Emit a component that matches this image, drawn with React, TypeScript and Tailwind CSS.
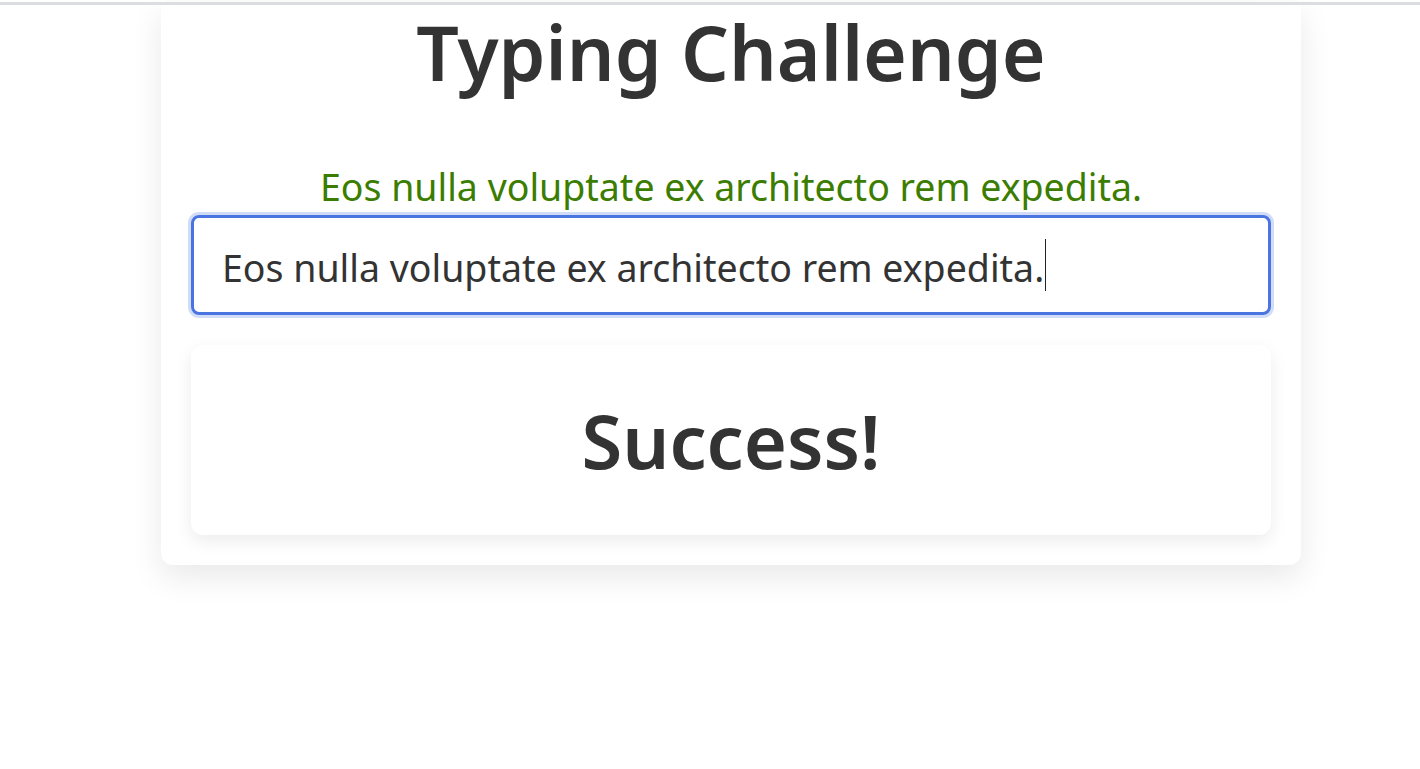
import React from "react";

export default function App() {
  return (
    <div className="min-h-[769px] w-full bg-white overflow-hidden" style={{ fontFamily: '"Noto Sans", "Open Sans", sans-serif' }}>
      <div className="h-[2px] bg-white" />
      <div className="h-[3px] bg-[#dcdde0] relative z-10" />
      <div className="ml-[161px] w-[1140px] bg-white rounded-b-xl shadow-[0_12px_32px_rgba(0,0,0,0.09)] px-[30px] pb-[30px] -mt-[3px]">
        <h1 className="text-center text-[75px] leading-[96px] font-semibold text-[#333333] pt-[2px]">
          Typing Challenge
        </h1>
        <p className="text-center text-[37.5px] leading-[48px] text-[#3b7d00] mt-[63px]">
          Eos nulla voluptate ex architecto rem expedita.
        </p>
        <div className="mt-[4px] h-[100px] rounded-lg border-[3px] border-[#4a74e0] ring-[3px] ring-[#d1dcf7] flex items-center px-[28px] pt-[6px] text-[37.5px] text-[#333333]">
          <span>Eos nulla voluptate ex architecto rem expedita.</span>
          <span className="inline-block w-[1px] h-[52px] bg-[#222] ml-[1px] mb-[6px]" />
        </div>
        <div className="mt-[30px] h-[190px] rounded-xl bg-white shadow-[0_6px_18px_rgba(0,0,0,0.08)] flex items-center justify-center">
          <span className="text-[74px] font-semibold text-[#333333]">Success!</span>
        </div>
      </div>
    </div>
  );
}
